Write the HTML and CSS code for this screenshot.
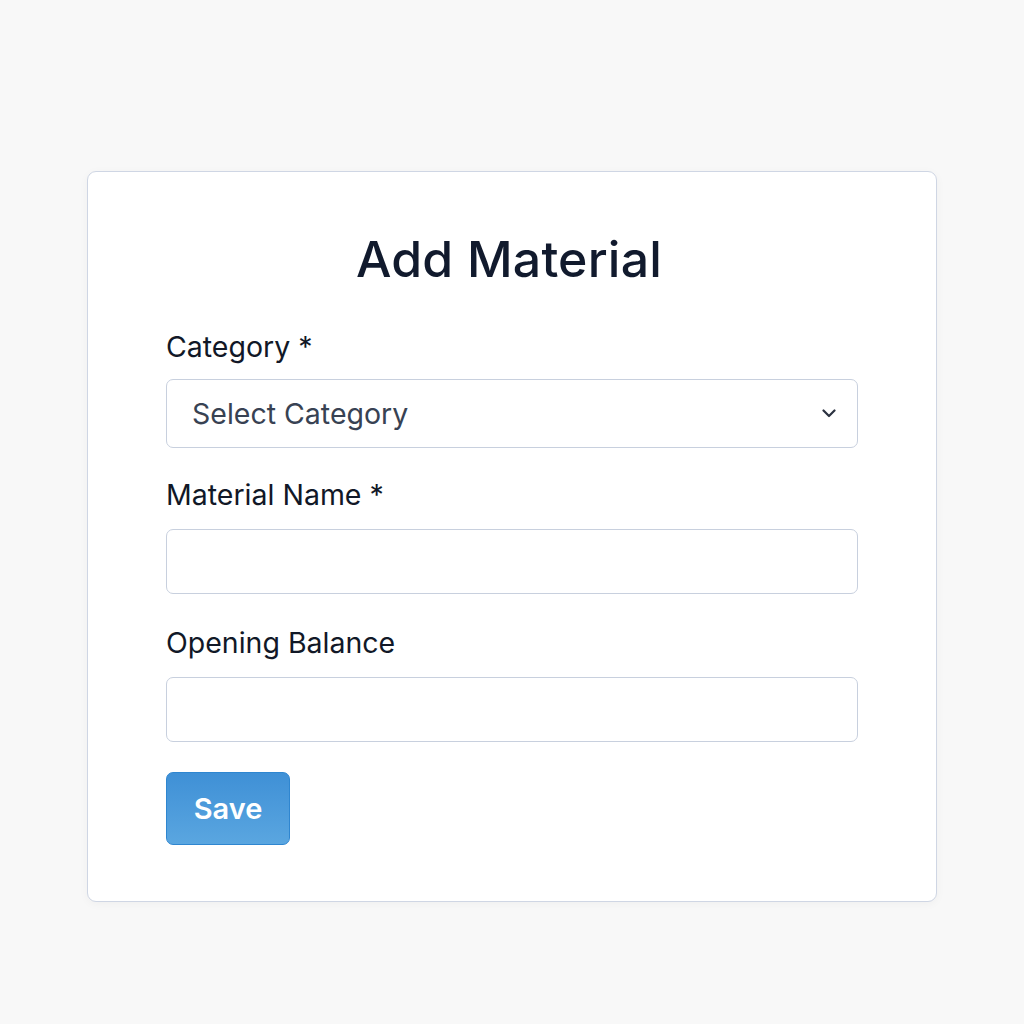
FILE: index.html
```html
<!DOCTYPE html>
<html lang="en">
<head>
<meta charset="utf-8">
<title>Add Material</title>
<link rel="stylesheet" href="styles.css">
</head>
<body>
<div class="card">
  <h1 class="title">Add Material</h1>
  <form class="form">
    <div class="field">
      <label class="label">Category *</label>
      <div class="select">
        <span class="select-text">Select Category</span>
        <svg class="chevron" width="14" height="9" viewBox="0 0 14 9"><path d="M1.5 1.5 L7 7 L12.5 1.5" fill="none" stroke="#2b3240" stroke-width="2.2" stroke-linecap="round" stroke-linejoin="round"/></svg>
      </div>
    </div>
    <div class="field">
      <label class="label">Material Name *</label>
      <div class="input"></div>
    </div>
    <div class="field">
      <label class="label">Opening Balance</label>
      <div class="input"></div>
    </div>
    <div class="actions">
      <button type="button" class="btn">Save</button>
    </div>
  </form>
</div>
</body>
</html>
```
FILE: styles.css
```css
html, body {
  margin: 0;
  padding: 0;
}
body {
  background: #f8f8f8;
  font-family: Inter, "Noto Sans", sans-serif;
  padding: 171px 0 0 87px;
  min-height: 1024px;
  box-sizing: border-box;
}
.card {
  width: 850px;
  box-sizing: border-box;
  background: #ffffff;
  border: 1px solid #cfd6e4;
  border-radius: 9px;
  box-shadow: 0 2px 10px rgba(0, 0, 0, 0.04);
  padding: 56px 78px 56px;
}
.title {
  margin: 0 0 40px;
  text-align: center;
  font-size: 50px;
  line-height: 62px;
  font-weight: 500;
  color: #111a2d;
  letter-spacing: 0.2px;
  padding-right: 6px;
}
.form {
  display: flex;
  flex-direction: column;
}
.field {
  display: flex;
  flex-direction: column;
}
.field + .field {
  margin-top: 30px;
}
.field:nth-child(3) {
  margin-top: 32px;
}
.label {
  font-size: 28.5px;
  line-height: 34px;
  font-weight: 400;
  color: #111827;
  margin-bottom: 17px;
}
.field:first-child .label {
  margin-bottom: 15px;
}
.select {
  height: 69px;
  box-sizing: border-box;
  border: 1px solid #c8d0de;
  border-radius: 7px;
  display: flex;
  align-items: center;
  justify-content: space-between;
  padding: 0 21px 0 25px;
}
.select-text {
  font-size: 28.5px;
  color: #384253;
}
.chevron {
  display: block;
}
.input {
  height: 65px;
  box-sizing: border-box;
  border: 1px solid #c8d0de;
  border-radius: 7px;
}
.actions {
  margin-top: 30px;
  display: flex;
}
.btn {
  width: 124px;
  height: 73px;
  border: 1px solid #2f86d0;
  border-radius: 7px;
  background: linear-gradient(#3f90d6, #5aa6e0);
  color: #ffffff;
  font-family: Inter, "Noto Sans", sans-serif;
  font-size: 29px;
  font-weight: 600;
  padding: 0;
}
```
